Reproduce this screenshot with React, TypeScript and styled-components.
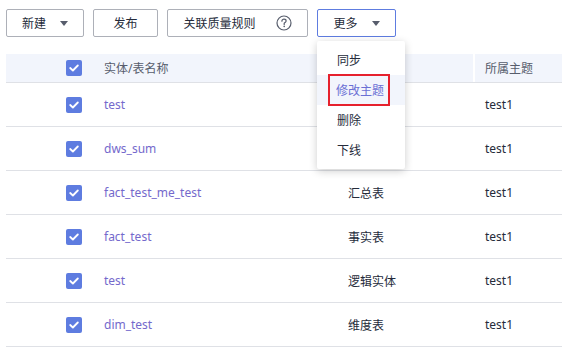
import styled, { createGlobalStyle } from "styled-components";

const GlobalStyle = createGlobalStyle`
  body {
    margin: 0;
    background: #ffffff;
    font-family: "Noto Sans", "Noto Sans CJK SC", sans-serif;
    font-size: 12px;
    color: #252b3a;
  }
`;

const Page = styled.div`
  position: relative;
  width: 562px;
  height: 357px;
  overflow: hidden;
  padding: 9px 0 0 6px;
  box-sizing: border-box;
`;

const Toolbar = styled.div`
  display: flex;
  gap: 9px;
  height: 28px;
`;

const Button = styled.div<{ $w: number; $active?: boolean }>`
  position: relative;
  width: ${(p) => p.$w}px;
  height: 28px;
  box-sizing: border-box;
  border: 1px solid ${(p) => (p.$active ? "#5e7ce0" : "#adb0b8")};
  border-radius: 2px;
  display: flex;
  align-items: center;
  justify-content: center;
  gap: 8px;
  font-size: 12px;
  color: #252b3a;
`;

const Caret = styled.span`
  width: 0;
  height: 0;
  border-left: 4px solid transparent;
  border-right: 4px solid transparent;
  border-top: 5px solid #575d6c;
  margin-left: 6px;
`;

const Spacer = styled.span`
  width: 4px;
`;

const Table = styled.div`
  margin-top: 17px;
  display: flex;
  flex-direction: column;
`;

const Row = styled.div<{ $head?: boolean }>`
  display: grid;
  grid-template-columns: 98px 244px 125px 1fr;
  align-items: center;
  height: ${(p) => (p.$head ? 29 : 44)}px;
  box-sizing: border-box;
  background: ${(p) => (p.$head ? "#f2f5fc" : "#ffffff")};
  border-bottom: 1px solid #dfe1e6;
  color: ${(p) => (p.$head ? "#575d6c" : "#252b3a")};
`;

const CheckCell = styled.div`
  display: flex;
  justify-content: flex-start;
  padding-left: 60px;
`;

const Check = styled.span`
  width: 16px;
  height: 16px;
  border-radius: 2px;
  background: #5e7ce0;
  display: flex;
  align-items: center;
  justify-content: center;
`;

const Cell = styled.div<{ $sep?: boolean }>`
  height: 100%;
  display: flex;
  align-items: center;
  box-sizing: border-box;
  padding-left: ${(p) => (p.$sep ? 10 : 0)}px;
  border-left: ${(p) => (p.$sep ? "2px solid #ffffff" : "none")};
`;

const Link = styled.span`
  color: #7469cc;
`;

const Menu = styled.div`
  position: absolute;
  left: 317px;
  top: 41px;
  width: 88px;
  padding: 4px 0;
  box-sizing: border-box;
  background: #ffffff;
  border-radius: 2px;
  box-shadow: 0 2px 8px rgba(0, 0, 0, 0.2);
  display: flex;
  flex-direction: column;
`;

const MenuItem = styled.div<{ $hover?: boolean }>`
  height: 30px;
  display: flex;
  align-items: center;
  padding-left: 20px;
  background: ${(p) => (p.$hover ? "#f2f5fc" : "transparent")};
  color: ${(p) => (p.$hover ? "#6a6fd4" : "#252b3a")};
`;

const Marked = styled.span`
  outline: 2px solid #e6212d;
  outline-offset: 0;
  padding: 5px 4px 5px 6px;
  margin-left: -7px;
`;

const CheckMark = () => (
  <svg width="10" height="8" viewBox="0 0 10 8">
    <path d="M1.2 4 L3.9 6.5 L8.8 1.5" stroke="#fff" strokeWidth="1.8" fill="none" strokeLinecap="round" strokeLinejoin="round" />
  </svg>
);

const HelpIcon = () => (
  <svg width="16" height="16" viewBox="0 0 16 16">
    <circle cx="8" cy="8" r="7" stroke="#575d6c" strokeWidth="1.2" fill="none" />
    <path d="M5.9 6.2 C5.9 4.9 6.9 4.2 8 4.2 C9.2 4.2 10.1 5 10.1 6 C10.1 7.2 8.6 7.4 8.2 8.3 L8.2 9.4" stroke="#575d6c" strokeWidth="1.2" fill="none" strokeLinecap="round" />
    <circle cx="8.2" cy="11.4" r="0.8" fill="#575d6c" />
  </svg>
);

const rows = [
  { name: "test", type: "", theme: "test1" },
  { name: "dws_sum", type: "", theme: "test1" },
  { name: "fact_test_me_test", type: "汇总表", theme: "test1" },
  { name: "fact_test", type: "事实表", theme: "test1" },
  { name: "test", type: "逻辑实体", theme: "test1" },
  { name: "dim_test", type: "维度表", theme: "test1" },
];

const App = () => {
  return (
    <Page>
      <GlobalStyle />
      <Toolbar>
        <Button $w={78}>
          新建
          <Caret />
        </Button>
        <Button $w={65}>发布</Button>
        <Button $w={141}>
          关联质量规则
          <Spacer />
          <HelpIcon />
        </Button>
        <Button $w={79} $active>
          更多
          <Caret />
        </Button>
      </Toolbar>
      <Table>
        <Row $head>
          <CheckCell>
            <Check>
              <CheckMark />
            </Check>
          </CheckCell>
          <Cell>实体/表名称</Cell>
          <Cell />
          <Cell $sep>所属主题</Cell>
        </Row>
        {rows.map((r, i) => (
          <Row key={i}>
            <CheckCell>
              <Check>
                <CheckMark />
              </Check>
            </CheckCell>
            <Cell>
              <Link>{r.name}</Link>
            </Cell>
            <Cell>{r.type}</Cell>
            <Cell $sep>{r.theme}</Cell>
          </Row>
        ))}
      </Table>
      <Menu>
        <MenuItem>同步</MenuItem>
        <MenuItem $hover>
          <Marked>修改主题</Marked>
        </MenuItem>
        <MenuItem>删除</MenuItem>
        <MenuItem>下线</MenuItem>
      </Menu>
    </Page>
  );
};

export default App;
